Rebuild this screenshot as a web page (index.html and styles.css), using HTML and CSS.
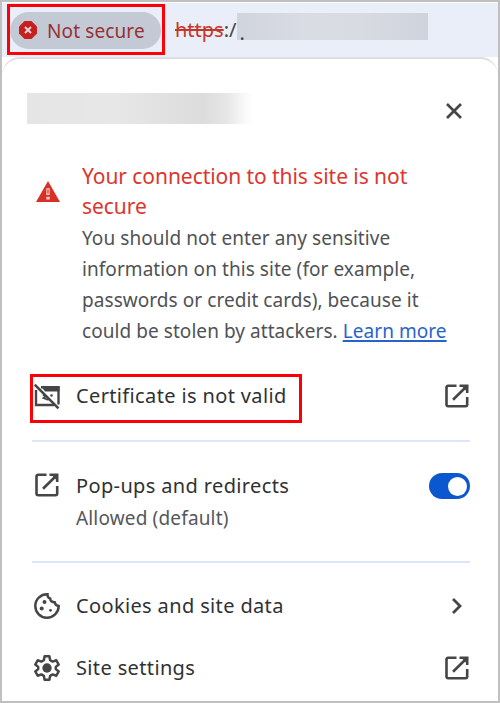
FILE: index.html
```html
<!DOCTYPE html>
<html lang="en">
<head>
<meta charset="utf-8">
<title>Site information</title>
<link rel="stylesheet" href="styles.css">
</head>
<body>
<svg class="defs" width="0" height="0">
  <symbol id="launch" viewBox="0 0 24 24"><path d="M11.500 1.800H3.200Q1.500 1.800 1.500 3.500V20.500Q1.500 22.200 3.200 22.200H20.500Q22.200 22.200 22.200 20.500V13M14.500 1.800H22.200V9M22 2L8 15.800" fill="none" stroke="currentColor" stroke-width="2.600"/><path d="M16.500 2H22.500V8z" fill="currentColor"/></symbol>
</svg>
<div class="frame">
  <header class="toolbar">
    <div class="callout callout-chip">
      <div class="chip">
        <svg class="chip-icon" viewBox="0 0 18 18"><path d="M5.500 0h7L18 5.500v7L12.500 18h-7L0 12.500v-7z" fill="#c5221f"/><path d="M6 6l6 6M12 6l-6 6" stroke="#e6d2da" stroke-width="2"/></svg>
        <span class="chip-text">Not secure</span>
      </div>
    </div>
    <div class="url"><span class="scheme">https</span><span class="sep">:/</span><span class="dot">.</span></div>
    <div class="url-mask"></div>
  </header>
  <main class="panel">
    <div class="panel-head">
      <div class="host-mask"></div>
      <svg class="close" viewBox="0 0 16 16"><path d="M1 1l14 14M15 1L1 15" stroke="#444746" stroke-width="2.700"/></svg>
    </div>
    <section class="warning">
      <svg class="warn-icon" viewBox="0 0 24 21"><path d="M12 0l12 21H0z" fill="#d93025"/><path d="M10.300 7.300h3.400v6.800h-3.400zM10.300 15.800h3.400v2.600h-3.400z" fill="#f6cfcc"/><path d="M11.400 8.500h1.200v4h-1.200z" fill="#d93025"/></svg>
      <div class="warn-copy">
        <h1><span>Your connection to this site is not</span><span>secure</span></h1>
        <p><span>You should not enter any sensitive</span><span>information on this site (for example,</span><span>passwords or credit cards), because it</span><span>could be stolen by attackers. <a>Learn more</a></span></p>
      </div>
    </section>
    <div class="row row-cert">
      <div class="callout callout-cert">
        <svg class="cert-icon" viewBox="0 0 26 26"><path d="M2 6V21H20M7 3.200H24.500V20.500" fill="none" stroke="#444746" stroke-width="2.400"/><path d="M7 2.200H25.500V7.500H11z" fill="#444746"/><path d="M9 10.500l2.500 2-2 1.500 5 2" fill="none" stroke="#444746" stroke-width="1.800"/><circle cx="17.500" cy="11.500" r="1.300" fill="#444746"/><path d="M.7 .7L24.500 24.300" stroke="#444746" stroke-width="2.600"/></svg>
        <span class="label t-cert">Certificate is not valid</span>
      </div>
      <svg class="launch"><use href="#launch"/></svg>
    </div>
    <hr>
    <div class="row row-pop">
      <svg class="launch lead"><use href="#launch"/></svg>
      <div class="stack"><span class="label t-pop">Pop-ups and redirects</span><span class="sub">Allowed (default)</span></div>
      <div class="switch"><i></i></div>
    </div>
    <hr>
    <div class="row row-cookie">
      <svg class="round-icon" viewBox="0 0 26 26"><path d="M13.500 1.300A11.700 11.700 0 1 0 24.700 13.100Q21.500 12.800 20.700 9.300Q16.500 9.300 16.100 5.400Q13.300 4.600 13.500 1.300z" fill="none" stroke="#444746" stroke-width="2.500"/><g fill="#444746"><circle cx="10.500" cy="9" r="2"/><circle cx="7.700" cy="15.500" r="2"/><circle cx="16.500" cy="17.300" r="1.400"/></g></svg>
      <span class="label t-cookie">Cookies and site data</span>
      <svg class="chevron" viewBox="0 0 10 16"><path d="M1 1l7 7-7 7" fill="none" stroke="#444746" stroke-width="2.800"/></svg>
    </div>
    <div class="row row-settings">
      <svg class="round-icon" viewBox="0 0 26 26"><path d="M10.600 1.300h4.800l.7 3.800 2.600 1.500 3.600-1.300 2.400 4.200-2.900 2.400v2.200l2.900 2.400-2.400 4.200-3.600-1.300-2.600 1.500-.7 3.800h-4.800l-.7-3.800-2.600-1.500-3.600 1.300-2.400-4.200 2.900-2.400v-2.200L1.300 9.500l2.400-4.200 3.600 1.300 2.600-1.500z" fill="none" stroke="#444746" stroke-width="2.500" stroke-linejoin="round"/><circle cx="13" cy="13" r="4.700" fill="#444746"/></svg>
      <span class="label t-settings">Site settings</span>
      <svg class="launch"><use href="#launch"/></svg>
    </div>
  </main>
</div>
</body>
</html>
```
FILE: styles.css
```css
* { box-sizing: border-box; }
body { margin: 0; font-family: "Noto Sans", "Open Sans", sans-serif; color: #303133; background: #fff; }
.defs { display: block; height: 0; }
svg { display: block; flex: none; }
.frame { width: 500px; height: 703px; border: 2px solid #c0c0c0; overflow: hidden; background: #fff; }
.toolbar { display: flex; align-items: flex-start; height: 55px; padding: 2px 0 0 5px; background: #eaeef8; border-top: 1px solid #fff; }
.callout { border: 3px solid #fb0007; flex: none; }
.callout-chip { width: 158px; height: 51px; margin-top: -1px; padding: 5px 1px 0 0; }
.chip { display: flex; align-items: center; height: 37px; border-radius: 19px; background: #c3c9d5; padding-left: 9px; }
.chip-icon { width: 18px; height: 18px; margin-top: -1px; }
.chip-text { margin-left: 10px; font-size: 19px; letter-spacing: .12px; line-height: 30px; color: #973136; white-space: nowrap; }
.url { margin: 11px 0 0 10px; width: 62px; height: 32px; font-size: 20px; line-height: 28px; white-space: nowrap; color: #444746; }
.scheme { color: #c5372b; text-decoration: line-through; text-decoration-thickness: 2px; }
.dot { position: relative; z-index: 1; top: 3px; margin-left: 3px; }
.url-mask { position: relative; width: 191px; height: 27px; margin-top: 8px; background: linear-gradient(90deg, #d0d4dd, #d9dce3 35%, #d8dbe1 65%, #cfd3dc); }
.panel { height: 646px; border-top: 2px solid #dddee2; border-radius: 18px 18px 0 0; background: #fff; padding: 0 28px; }
.panel-head { display: flex; justify-content: space-between; padding: 34px 8px 0 0; height: 102px; margin-left: -3px; }
.host-mask { width: 226px; height: 31px; background: linear-gradient(90deg, #e5e5e5, #e7e7e7 40%, #dcdcdc 78%, #e6e6e6 88%, #fafafa 97%, #fff); }
.close { width: 16px; height: 16px; margin-top: 10px; }
.warning { display: flex; height: 215px; padding-left: 6px; }
.warn-icon { width: 24px; height: 21px; margin-top: 20px; }
.warn-copy { padding-left: 22px; white-space: nowrap; }
.warn-copy span { display: block; }
h1 { margin: 0; font-size: 21px; letter-spacing: -.06px; line-height: 30px; font-weight: 400; color: #dc362e; }
p { margin: 2px 0 0; font-size: 19px; letter-spacing: .06px; line-height: 31.1px; color: #505256; }
a { color: #2864c8; text-decoration: underline; text-decoration-thickness: 2px; text-underline-offset: 2px; }
.row { display: flex; align-items: center; padding-left: 4px; }
.row .launch, .row .switch, .row .chevron { margin-left: auto; }
.label { font-size: 20px; letter-spacing: .36px; line-height: 32px; white-space: nowrap; }
.launch { width: 24px; height: 24px; color: #444746; }
.row-cert { height: 64px; padding: 0; align-items: flex-start; }
.row .launch { margin-right: 1px; }
.row-cert .launch { margin-top: 8px; }
.callout-cert { display: flex; align-items: center; width: 272px; height: 49px; margin-top: -2px; }
.cert-icon { width: 26px; height: 26px; margin-left: 1px; margin-top: -3px; }
.t-cert { margin: -5px 0 0 16px; }
hr { border: 0; height: 2px; margin: 0 0 0 2px; background: #dce6fb; }
.row-pop { height: 119px; align-items: flex-start; padding: 31px 0 0 5px; }
.row-pop .launch.lead { margin: 0; }
.stack { display: flex; flex-direction: column; margin: -3px 0 0 17px; }
.sub { font-size: 19px; letter-spacing: .16px; line-height: 32px; color: #55575b; white-space: nowrap; }
.switch { width: 41px; height: 26px; border-radius: 13px; background: #0b57d0; padding: 4px 3px; display: flex; justify-content: flex-end; }
.switch i { width: 19px; height: 19px; border-radius: 50%; background: #fff; }
.row-cookie { height: 63px; margin-top: 11px; }
.row-settings { height: 62px; }
.round-icon { width: 26px; height: 26px; }
.row-cookie .label, .row-settings .label { margin-left: 16px; }
.chevron { width: 10px; height: 16px; margin-right: 8px; }
```
